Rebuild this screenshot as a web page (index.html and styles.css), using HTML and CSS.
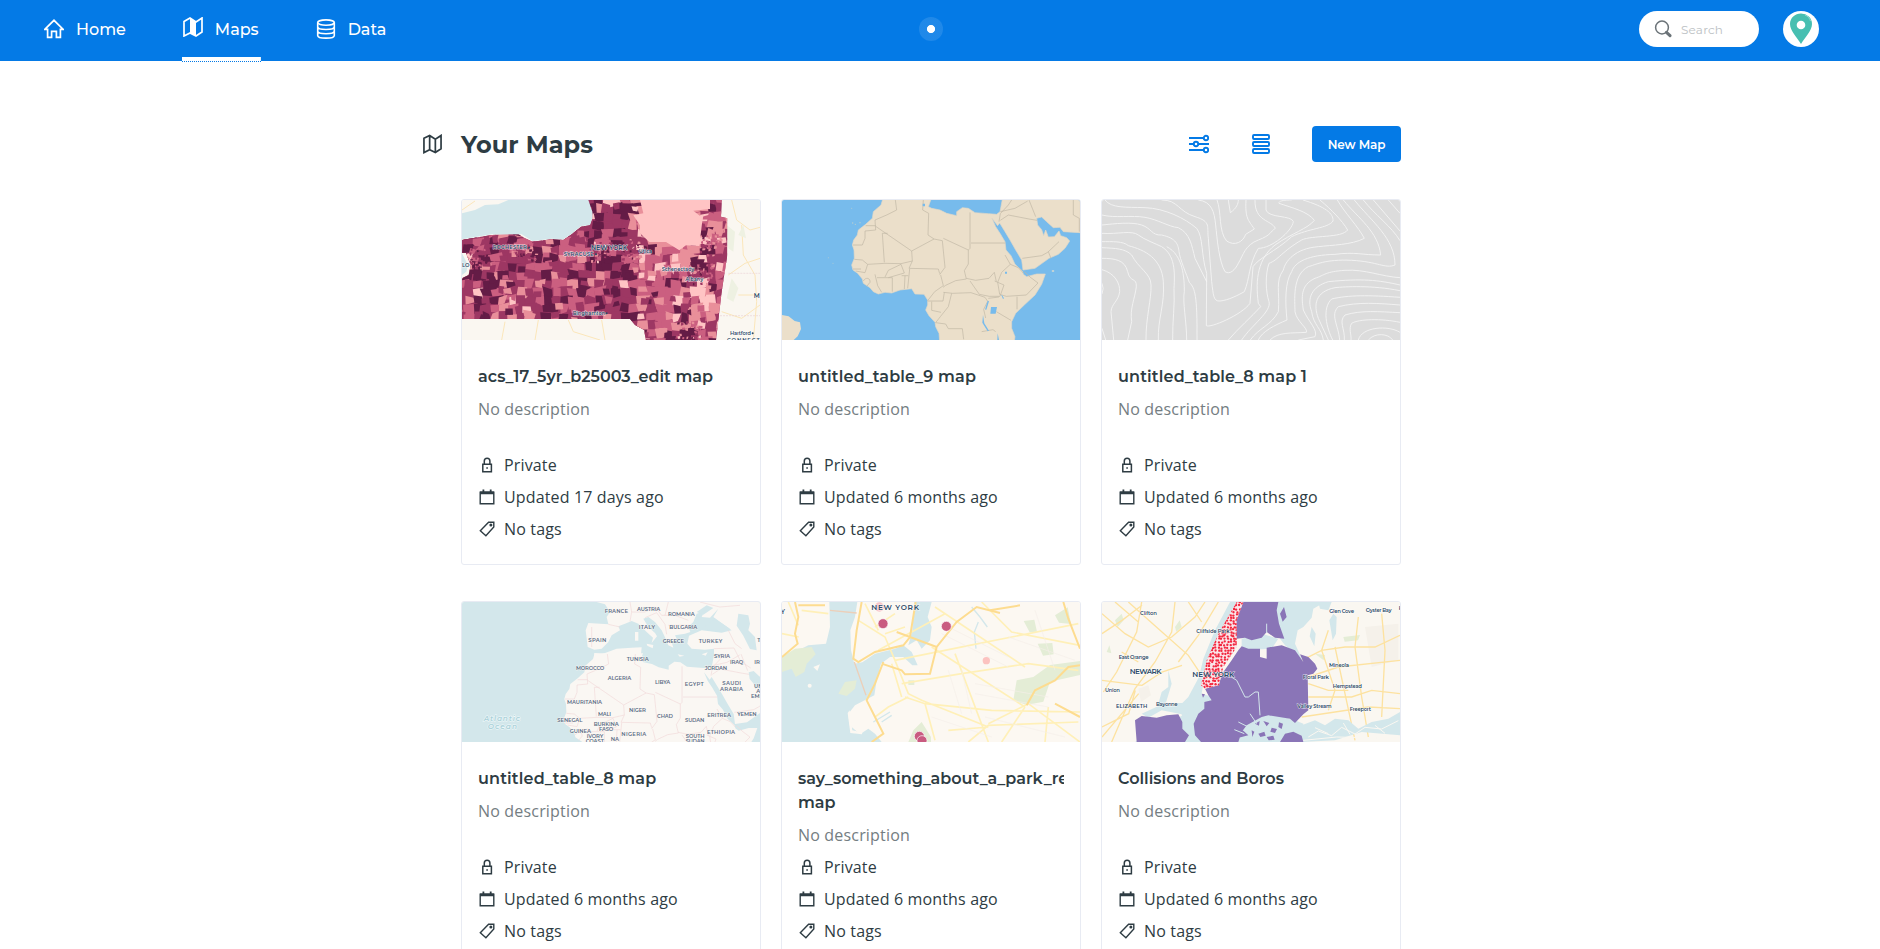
FILE: index.html
```html
<!DOCTYPE html>
<html lang="en">
<head>
<meta charset="utf-8">
<title>Your Maps</title>
<link rel="stylesheet" href="styles.css">
</head>
<body>
<svg class="defs" width="0" height="0" aria-hidden="true">
  <symbol id="i-map" viewBox="0 0 20 20"><path d="M1 4 7 1l6 4 6-4v14l-6 4-6-3-6 3zM7 1v15M13 5v14" fill="none" stroke="currentColor" stroke-width="1.8"/></symbol>
  <symbol id="i-lock" viewBox="0 0 16 16"><path d="M3.8 7.2h8.6v7.600H3.8zM5.3 7V4a2.8 2.8 0 0 1 5.6 0v3" fill="none" stroke="currentColor" stroke-width="1.5"/><path d="M7.3 10.2h1.6v1.600H7.3z" fill="currentColor"/></symbol>
  <symbol id="i-cal" viewBox="0 0 16 16"><path d="M1.2 3.2h13.600v11.600H1.2z" fill="none" stroke="currentColor" stroke-width="1.4"/><path d="M1 2.500h14v2.700H1zM3.500.5h1.800v3H3.500zM10.800.5h1.800v3h-1.800z" fill="currentColor"/></symbol>
  <symbol id="i-tag" viewBox="0 0 16 16"><path d="M1.3 9.800 9.600 1.200h5.200V6L6.900 14.800z" fill="none" stroke="currentColor" stroke-width="1.4"/><circle cx="11.900" cy="4.100" r="1.500" fill="currentColor"/></symbol>
  <symbol id="africa" viewBox="0 0 936 450" overflow="visible">
    <path d="M323 13 318 30 295 50 292 70 272 88 250 105 247 120 236 135 232 150 237 165 238 190 230 210 234 225 248 235 262 252 265 265 285 278 295 290 310 297 330 292 350 294 375 285 410 281 420 297 447 298 458 315 458 330 452 345 462 362 480 382 482 395 492 415 494 440H718L720 425 710 400 710 380 722 355 750 328 780 300 800 268 811 237 785 237 755 245 745 238 742 228 720 208 708 182 693 165 690 140 675 115 662 95 651 70 668 92 674 84 690 110 705 135 722 165 740 195 744 225 780 220 822 190 850 178 870 160 884 138 875 128 857 122 852 108 838 125 820 126 812 105 806 122 800 104 788 90 785 70 800 66 815 80 835 98 855 97 865 110 915 113V13H682L675 50 665 58 640 56 600 53 580 40 562 38 545 50 545 62 515 55 495 45 470 40 460 35 468 13Z"/>
  </symbol>
  <symbol id="borders" viewBox="0 0 936 450" overflow="visible">
    <path fill="none" d="M361 15 365 45 335 60 300 75 302 105 270 108 270 130 262 150H234M302 94 410 168 412 198 378 206 330 205 278 208 262 195 238 193M322 115 328 202M322 115h16M272 92h30M445 15l-2 30 18 10-2 65 18 12-67 36M477 132l25 5 8 80-16 22M412 198l-10 22 88 2 4 14M505 130l75 35 5-5V52M588 144h103M580 165v42l-12 20 6 25-32 5-30 14-8 6M497 240l8 32-26 18-21 27M404 222l-6 58M390 242l-2 40M380 242h20M352 248v42M306 248h46M330 246l10-20 38-18 10 26-48 14M278 208l-8 25-28-5M234 222h24M265 258c8-14 22-8 20 4l-10 12M300 238l8 34 12 20M574 250l28 6 40-6 16-18 6 28M585 258l28 40 30 6 32 0 12-34-28-12M690 180l16 28-26 24-12 30 6 36 20 6 60-4 35-36-24-18-16-16M706 208l24 10 15 16M505 292l28 3 55-2 42 14 8 12-12 24 6 26M458 318l46 0 4-26M530 295l-10 40-24 30-14 18 30 4 8 14h42l4 32M470 320v26l28 6M726 305v38M664 350l44 26M640 310l32-4M620 410l34-6 8 6M672 80l4-24 24-26 10-15M676 50l44-10 38-22M676 76l24-16 62 12 24 4M762 15l20 50M742 190l58-8 18-10 34-32M820 170l8 20M895 15v45l18 10v40"/>
  </symbol>
</svg>

<header class="topbar">
  <nav class="nav">
    <a class="nav-item"><svg class="nav-icon" viewBox="0 0 20 20"><path d="M.8 10.400 10 1.300l9.200 9.100H16.400v8H12.400v-6H7.600v6H3.600v-8z" fill="none" stroke="#fff" stroke-width="1.700"/></svg><span>Home</span></a>
    <a class="nav-item active"><svg class="nav-icon up" viewBox="0 0 20 20"><path d="M1 4.500 7 1l6 4 6-4v14l-6 4-6-3-6 3z" fill="none" stroke="#fff" stroke-width="1.700"/><path d="M7 1l6 4v14l-6-3z" fill="#fff"/></svg><span>Maps</span></a>
    <a class="nav-item"><svg class="nav-icon" viewBox="0 0 20 20"><g fill="none" stroke="#fff" stroke-width="1.600"><ellipse cx="10" cy="3.600" rx="8.300" ry="2.700"/><path d="M1.700 3.600v12.800c0 3.600 16.600 3.600 16.600 0V3.600M1.700 7.800c0 3.600 16.600 3.600 16.600 0M1.700 12.100c0 3.600 16.600 3.600 16.600 0"/></g></svg><span>Data</span></a>
  </nav>
  <div class="pulse"></div>
  <div class="tools">
    <div class="search"><svg viewBox="0 0 18 18"><circle cx="8" cy="7.500" r="6.400" fill="none" stroke="#6b7378" stroke-width="1.500"/><path d="M12.500 12.300l3.500 3.400" stroke="#6b7378" stroke-width="3" stroke-linecap="round"/></svg><span>Search</span></div>
    <svg class="avatar" viewBox="0 0 36 36"><circle cx="18" cy="18" r="18" fill="#fff"/><path d="M18 33C14 26 7 20 7 13a11 10.500 0 0 1 22 0c0 7-7 13-11 20z" fill="#47bfb1"/><path d="M22 4c3 1 5 4 5.500 6" stroke="#8fd9d0" fill="none"/><circle cx="18" cy="14" r="4.300" fill="#fff"/></svg>
  </div>
</header>

<main class="page">
  <div class="heading">
    <svg class="head-icon"><use href="#i-map"/></svg>
    <h1>Your Maps</h1>
    <div class="actions">
      <svg class="act" viewBox="0 0 20 20"><g fill="none" stroke="#047ae6" stroke-width="1.900"><path d="M0 4h14.500M0 10h4.500M9.500 10H20M0 16h14.500"/><circle cx="17" cy="4" r="2.200"/><circle cx="7" cy="10" r="2.200"/><circle cx="17" cy="16" r="2.200"/></g></svg>
      <svg class="act rows" viewBox="0 0 18 20"><g fill="none" stroke="#047ae6" stroke-width="1.900"><rect x="1" y="1" width="16" height="4" rx="1"/><rect x="1" y="8" width="16" height="4" rx="1"/><rect x="1" y="15" width="16" height="4" rx="1"/></g></svg>
      <button class="new-map">New Map</button>
    </div>
  </div>

  <section class="grid">
    <article class="card">
      <svg class="thumb" viewBox="21 15 894 420">
        <path fill="#faf7f1" d="M21 15h894v420H21z"/>
        <g fill="none" stroke="#fbe6ba" stroke-width="3"><path d="M21 45 60 18M140 435l10-55M250 375l-10 60M340 375l15 35 80 25M830 15l15 60 40 30 30-8M860 90l5 90 35 60 5 80-10 115M820 240l50-35 45-15M800 350l60 20 55-40M850 300l60 0M440 375l10 60"/></g>
        <path d="M820 235h95M786 362h129" stroke="#ecd3d6" stroke-width="2" stroke-dasharray="6 3"/>
        <g fill="#eef1e2"><path d="M815 90l25 20-5 60-15-10zM830 250l20 30-15 40-20-10zM850 120l15-30 8 40z"/></g>
        <clipPath id="state"><path d="M21 135 60 128 110 120 190 118 210 130 232 140 290 133 325 135 350 118 378 95 405 90 412 70 412 50 400 25 385 15H800L798 65 817 70 817 180 800 290 783 435H572L568 405 540 390 525 372H21V250l20-10 6-30-14-36-12 0z"/></clipPath>
        <g id="counties" clip-path="url(#state)"></g>
        <path clip-path="url(#state)" fill="#ffc4c4" d="M555 15H765V42l-50 5 28 22-10 84-40-2-20 15-40-25-50 0-28-26 0-24-20-30 30-6z"/>
        <path fill="#d3e7eb" d="M21 55 60 45 90 30 130 28 160 15H400L412 50 412 70 405 90 378 93 350 116 325 133 290 131 232 138 200 118 110 118 21 133zM21 175l18 35-5 20-13 10z"/>
        <g class="lbl"><text x="113" y="163" textLength="103">ROCHESTER</text><text x="326" y="184" textLength="90">SYRACUSE</text><text x="408" y="165" class="mid" textLength="109">NEW YORK</text><text x="551" y="174" textLength="40">Utica</text><text x="620" y="228" textLength="98">Schenectady</text><text x="691" y="259" textLength="54">Albany</text><text x="353" y="361" textLength="98">Binghamton</text><text x="825" y="421" textLength="63">Hartford</text><text x="21" y="215">LO</text><text x="896" y="309" class="mid">M</text><text x="816" y="441" textLength="98">CONNECT</text></g>
        <g fill="#2c4a68"><circle cx="893" cy="415" r="3"/><circle cx="222" cy="158" r="3"/><circle cx="423" cy="178" r="3"/><circle cx="455" cy="355" r="3"/></g>
      </svg>
      <div class="body"><div class="info"><h2 class="snug">acs_17_5yr_b25003_edit map</h2><p>No description</p></div>
      <ul><li><svg><use href="#i-lock"/></svg>Private</li><li><svg><use href="#i-cal"/></svg>Updated 17 days ago</li><li><svg><use href="#i-tag"/></svg>No tags</li></ul></div>
    </article>

    <article class="card">
      <svg class="thumb" viewBox="21 15 894 420">
        <path fill="#77bbec" d="M21 15h894v420H21z"/>
        <use href="#africa" width="936" height="450" fill="#ebdfca" stroke="#e2d8c6" stroke-width="2"/>
        <use href="#borders" width="936" height="450" stroke="#c0b6a5" stroke-width="2"/>
        <path fill="#ebdfca" d="M21 360l20 4 18 14 16 4 3 20-10 22-12 11H21z"/>
        <path fill="#77bbec" d="M648 336h18l-4 20-16 0zM443 26h7v8h-7zM690 230h6v6h-6zM681 300l6 10-3 2-5-12zM624 360l4 25 14 22-4 2-16-26zM668 415l4 20h-5z"/>
        <path d="M640 318l-8 26" stroke="#77bbec" stroke-width="4"/><ellipse cx="834" cy="228" rx="4" ry="2" fill="#ebdfca"/>
        <g fill="#b9cdd0"><circle cx="233" cy="84" r="2"/><circle cx="241" cy="88" r="2"/><circle cx="255" cy="83" r="2"/><circle cx="230" cy="40" r="1.500"/><circle cx="160" cy="188" r="1.500"/><circle cx="174" cy="205" r="1.500"/></g>
      </svg>
      <div class="body"><div class="info"><h2 class="loose">untitled_table_9 map</h2><p>No description</p></div>
      <ul><li><svg><use href="#i-lock"/></svg>Private</li><li><svg><use href="#i-cal"/></svg>Updated 6 months ago</li><li><svg><use href="#i-tag"/></svg>No tags</li></ul></div>
    </article>

    <article class="card">
      <svg class="thumb" viewBox="21 15 894 420">
        <path fill="#dcdcdc" d="M21 15h894v420H21z"/>
        <g fill="none" stroke="#f5f5f5" stroke-width="2.600">
          <path d="M30 15C50 40 90 36 150 38S270 70 305 100C325 125 318 180 335 235L334 392C345 400 440 360 465 325L474 215C490 190 540 170 590 125 640 100 700 100 714 78 716 55 690 35 624 15"/>
          <path d="M21 60C60 70 110 60 150 67S220 95 250 98C285 115 290 150 300 190L335 260"/>
          <path d="M200 15C250 15 250 50 300 65S335 95 340 130L350 260C355 300 355 320 375 318 400 316 430 300 448 290 465 250 460 210 490 160 530 160 590 110 595 80 590 60 520 70 513 45V15"/>
          <path d="M310 15C350 20 358 50 362 90S372 200 390 230C405 240 420 225 430 205 445 180 450 150 490 135S525 110 541 100C530 75 478 80 480 15"/>
          <path d="M366 15C380 50 370 110 395 138 420 155 445 140 452 118L478 102C460 75 450 70 453 15M400 15 406 53C425 40 430 25 430 15"/>
          <path d="M21 90C60 86 110 80 140 90S170 122 200 120C245 130 250 150 252 170S275 240 283 262C300 280 307 300 306 435"/>
          <path d="M21 115C70 118 110 105 130 120S180 145 200 155C240 180 240 230 237 280 240 330 232 380 233 435"/>
          <path d="M21 140C50 140 85 138 100 152 150 165 200 190 205 260S188 370 190 435"/>
          <path d="M21 158C60 160 90 160 110 180 130 220 168 235 168 270 170 310 152 370 153 435"/>
          <path d="M21 190C60 190 90 195 98 230S125 245 124 275C120 310 104 340 110 380L98 435M21 224C60 235 75 265 74 290 70 320 50 325 48 350L56 435M21 400 32 435"/>
          <path d="M21 265Q28 280 21 297M215 155C265 180 268 250 268 290 262 320 275 380 275 435"/>
          <path d="M590 15C545 15 552 25 552 25 590 38 640 50 658 76 640 100 590 115 540 150 490 190 480 250 490 325L497 335C470 365 430 400 400 435"/>
          <path d="M675 15C710 45 740 75 758 105 740 130 650 120 620 135 560 170 550 195 522 205 510 240 512 290 522 320 530 350 470 390 440 435"/>
          <path d="M727 15C750 55 790 95 808 130 770 150 710 150 670 155 600 160 570 200 565 225 540 260 555 290 550 350 530 390 490 400 466 435"/>
          <path d="M745 15C790 70 850 110 857 180 800 180 780 170 720 178 640 180 600 200 590 230 570 260 570 320 576 375 540 390 500 410 490 435"/>
          <path d="M778 15C830 80 900 130 900 210 870 222 850 200 770 196S660 210 640 215C590 240 600 320 600 350 605 380 640 400 634 412 590 415 550 410 525 435"/>
          <path d="M805 15C840 60 890 95 915 137M835 15 915 108M880 15 915 55"/>
          <path d="M915 248C860 245 810 222 750 226S690 240 660 250C615 270 620 310 625 345 640 380 670 405 660 425L610 435"/>
          <path d="M915 270C850 255 800 250 700 260 650 275 635 310 650 350 655 390 680 400 685 435"/>
          <path d="M915 287C830 270 750 275 720 278 660 290 655 330 670 370L700 435M915 307C820 300 760 300 710 312 680 340 695 400 713 435"/>
          <path d="M915 330C850 325 790 320 730 335 705 360 730 390 734 435M915 353C850 350 800 345 750 360 730 380 750 400 748 435M915 382C860 370 790 372 770 385 760 400 770 420 768 435M790 435C800 395 880 390 915 412M820 435C840 412 880 415 893 435"/>
        </g>
      </svg>
      <div class="body"><div class="info"><h2 class="loose">untitled_table_8 map 1</h2><p>No description</p></div>
      <ul><li><svg><use href="#i-lock"/></svg>Private</li><li><svg><use href="#i-cal"/></svg>Updated 6 months ago</li><li><svg><use href="#i-tag"/></svg>No tags</li></ul></div>
    </article>

    <article class="card">
      <svg class="thumb" viewBox="21 15 894 420">
        <path fill="#d3e7eb" d="M21 15h894v420H21z"/>
        <g fill="#faf7f3">
          <use href="#africa" x="96" y="156" width="936" height="450"/>
          <path d="M418 168 440 172 485 155 530 152 560 151 558 172 568 185 556 205 500 220 418 210zM425 15 450 22 465 45 455 60 460 82 400 78 392 100 398 150 418 158 440 155 460 135 470 115 495 100 490 88 510 80 530 72 550 80 575 105 594 122 590 138 606 118 600 108 580 90 565 65 580 60 600 75 620 100 632 125 640 145 655 152 650 135 665 125 660 115 690 110 706 105 700 90 715 75 725 50 748 43 740 60 765 62 790 35 775 60 830 100 800 107 740 100 702 116 697 140 710 155 750 158 777 155V180H915V15zM540 105h10v26h-10zM575 140l20 4-2 10-16-8zM668 172l20 4-14 3zM740 172l18-6-6 10z"/>
        </g>
        <path fill="#d3e7eb" d="M850 50l30 5 5 25-5 20 20 20 5 40-20-4-20-40-20-30zM725 45l30-20 20 8-30 20zM780 65l45 30-40 5-45-5z"/>
        <g stroke="#f1d9da" stroke-width="2" fill="none"><use href="#borders" x="96" y="156" width="936" height="450"/><path d="M460 82l35 8M410 90v60M525 15l5 30-5 28M530 45h40l30-15M570 62l35-15 25 35 5 30M600 30l20 25h40l40 15M640 85h65M640 15l-10 40M735 15l60 15 60-5M820 100l20 40 20 15M777 155l60-2 20 40 30 20"/></g>
        <g class="lbl g"><text x="449" y="48" textLength="70">FRANCE</text><text x="546" y="41" textLength="70">AUSTRIA</text><text x="639" y="57" textLength="80">ROMANIA</text><text x="551" y="96" textLength="49">ITALY</text><text x="643" y="97" textLength="84">BULGARIA</text><text x="400" y="134" textLength="54">SPAIN</text><text x="623" y="137" textLength="64">GREECE</text><text x="731" y="137" textLength="71">TURKEY</text><text x="515" y="192" textLength="66">TUNISIA</text><text x="777" y="184" textLength="48">SYRIA</text><text x="825" y="201" textLength="40">IRAQ</text><text x="898" y="200">IR</text><text x="907" y="134">T</text><text x="363" y="219" textLength="85">MOROCCO</text><text x="749" y="219" textLength="67">JORDAN</text><text x="458" y="250" textLength="71">ALGERIA</text><text x="600" y="261" textLength="46">LIBYA</text><text x="689" y="267" textLength="57">EGYPT</text><text x="802" y="265" textLength="56">SAUDI</text><text x="795" y="282" textLength="69">ARABIA</text><text x="897" y="272">UN</text><text x="904" y="288">A</text><text x="888" y="303">EMI</text><text x="336" y="322" textLength="105">MAURITANIA</text><text x="522" y="346" textLength="51">NIGER</text><text x="429" y="357" textLength="39">MALI</text><text x="606" y="364" textLength="48">CHAD</text><text x="690" y="374" textLength="58">SUDAN</text><text x="757" y="361" textLength="71">ERITREA</text><text x="847" y="357" textLength="58">YEMEN</text><text x="307" y="375" textLength="75">SENEGAL</text><text x="416" y="388" textLength="75">BURKINA</text><text x="432" y="403" textLength="43">FASO</text><text x="344" y="408" textLength="64">GUINEA</text><text x="395" y="424" textLength="50">IVORY</text><text x="392" y="439" textLength="55">COAST</text><text x="467" y="431">NA</text><text x="499" y="418" textLength="75">NIGERIA</text><text x="692" y="424" textLength="57">SOUTH</text><text x="692" y="439" textLength="57">SUDAN</text><text x="756" y="412" textLength="84">ETHIOPIA</text></g>
        <g class="ocean"><text x="86" y="371" textLength="109">Atlantic</text><text x="98" y="397" textLength="88">Ocean</text></g>
      </svg>
      <div class="body"><div class="info"><h2 class="loose">untitled_table_8 map</h2><p>No description</p></div>
      <ul><li><svg><use href="#i-lock"/></svg>Private</li><li><svg><use href="#i-cal"/></svg>Updated 6 months ago</li><li><svg><use href="#i-tag"/></svg>No tags</li></ul></div>
    </article>

    <article class="card">
      <svg class="thumb" viewBox="21 15 894 420">
        <path fill="#fcf8f2" d="M21 15h894v420H21z"/>
        <path fill="#d3e7eb" d="M163 15H247L240 60 226 100 228 160 238 200 262 196 300 170 360 155 385 145 410 165 428 205 412 205 385 180 345 180 318 200 305 250 298 295 240 325 220 350 224 385 255 412 280 395 300 410 320 435H21V190L60 165 100 145 153 140 165 90z"/>
        <path fill="#d3e7eb" d="M418 15H470L458 60 470 90 465 130 440 155 425 130 400 145 412 100z"/>
        <path fill="none" stroke="#d3e7eb" stroke-width="4" d="M590 30l25 30 22 30M610 75l-12 30 5 50M345 345l-50 30M320 375l30-20"/>
        <g fill="#e4edd6"><path d="M21 180 60 155 110 150 122 172 95 200 88 225 62 240 50 215 21 225zM190 290l20-35 35-5-5 25-25 22zM746 72l32-4 8 36-22 2zM788 140l44-2 4 34-32 4zM840 55l38-24 10 50-36-4zM715 310l10-60 50-10 50-36 90-12v42l-90 20-20 60-50 10zM400 435l15-35 25-25 28 45v15zM400 250h18v14h-18z"/></g>
        <g fill="#fcf8f2"><circle cx="104" cy="266" r="6"/><path d="M115 210l20-8-8 20zM224 340l8 60 20 4 14-28-5 36-35-4-8-60zM250 330l30-4-20 12zM270 350l30-2-26 12z"/></g>
        <g fill="none" stroke="#fff0b8" stroke-width="5"><path d="M250 70l80 50 30 70 40 100 40 20 200 80M270 20l40 80M310 160l200-110M300 90l60-40M360 190l250-50 300-60M380 260l180-30 200-30 150 20M390 300l60 20 200 20 265 5M470 150l280 180M480 30l270 180M540 170l100 265M620 15l90 90 205 40M640 380l120-60 155 115M400 300l-60 30-40 30M580 435l60-50 270-10M520 400l120-10M750 330l-70 105M820 330l-10 105M450 320l30 110M350 200l30 100M330 110l60-20M21 110l50 10M80 40l80 10M40 15l30 70"/></g>
        <g fill="none" stroke="#f5efe8" stroke-width="2"><path d="M500 80l200 100M500 110l200 100M600 260l220 40M600 290l220 40M520 220l40 130M560 220l30 130M630 360l240 60M470 360l180 60M780 40l60 180M700 120l200 70"/></g>
        <g fill="none" stroke="#fddc90" stroke-width="6"><path d="M60 15 70 60 60 110 68 140 21 180M70 25h80M260 15 245 100 235 185 250 195 300 165 385 145 405 120 422 15M365 105l120 45M320 200l60 20 10 12 75-2 20-80 60-75 60-45 70 18M325 195 300 260 275 310 300 360 325 410 290 435M645 40l90-15M865 15l15 50 35 90M755 325l25-45 60-30 40-40 35-5M840 320l75 40"/></g>
        <path d="M165 40l80 8M238 195l35 100" stroke="#eccfb9" stroke-width="4" fill="none"/>
        <circle cx="313" cy="30" r="14" fill="#f7c4c8"/>
        <g fill="#c95b80" stroke="#fff" stroke-width="2"><circle cx="324" cy="80" r="15"/><circle cx="514" cy="88" r="15"/><circle cx="433" cy="418" r="15"/><circle cx="441" cy="431" r="15"/></g><circle cx="634" cy="191" r="11" fill="#fcc3c0"/>
        <g class="lbl"><text x="289" y="39" class="big" textLength="143">NEW YORK</text><text x="17" y="51" class="mid">Y</text></g>
      </svg>
      <div class="body"><div class="info"><h2>say_something_about_a_park_recently map</h2><p>No description</p></div>
      <ul><li><svg><use href="#i-lock"/></svg>Private</li><li><svg><use href="#i-cal"/></svg>Updated 6 months ago</li><li><svg><use href="#i-tag"/></svg>No tags</li></ul></div>
    </article>

    <article class="card">
      <svg class="thumb" viewBox="21 15 894 420">
        <path fill="#faf7f1" d="M21 15h894v420H21z"/>
        <g fill="#e4edd6"><path d="M60 70l20-20 6 20-18 20zM240 90l14-20 6 20-16 14zM35 165l8-20 6 24zM660 170l30 4-4 16zM745 120l50-6-6 16-40 4zM850 160l24 10-16 16z"/></g>
        <path fill="#f5f1ea" d="M810 90l100-10v110l-80 20zM130 275l30-10 8 30-30 20z"/>
        <g fill="none" stroke="#fde2a0" stroke-width="4"><path d="M21 50 90 110 160 150 230 120 300 60 330 15M21 110l60-40 60-45M140 15l-15 90-60 120-40 60M100 15l90 80 90 80 40 60M21 250l120 15 60-40 60-20M240 15l-10 90-50 90-60 80-40 90-30 70M80 165l50 30M21 390l80-40 20-70M280 15l40 60M370 15l-60 100-60 80M21 420l110-130M60 15l70 60M620 190l60-30 70-10 90 0 75-35M640 240l90-30 185-20M640 300l130 0 60-20 85 10M700 100l-20 60 40 120-20 60M790 60l-10 90 20 150 20 120M860 50l10 110-10 200M620 360l200-30 95 5M720 150l60 280M640 260l60 20 60 0"/></g>
        <path fill="#d3e7eb" d="M405 15H425L400 60 360 150 330 230 320 290 300 340 295 400 310 435H260L270 400 260 352 200 340 160 362 140 350 210 318 262 318 280 300 312 240 325 185 360 100zM190 320l10-35 20-15 0-50 10 40-12 40-8 25zM540 15H690L655 35 650 62 625 90 608 100 600 140 625 195 600 170 570 145 555 125 545 60zM715 50l10 10-2 50-10 20-10-60zM650 90l12 20-4 38-14-30zM670 15h40l-10 25-25-5z"/>
        <path fill="#d3e7eb" d="M440 125l60-15 50 15-20 30-90 5zM620 385 660 370 690 385 720 365 760 370 790 395 830 375 880 365 915 345V415L800 405 720 430 620 435z"/>
        <path fill="#d3e7eb" d="M120 435H625V380L600 370 460 330 320 290 290 340z"/>
        <g fill="#8a75b7"><path d="M445 15H550L545 40 552 80 568 125 540 122 515 105 500 122 470 130 450 122 425 125 418 80zM330 275 370 262 385 225 410 190 430 160 440 148 460 155 495 155 495 180 515 185 515 152 560 145 600 160 625 195 615 172 640 180 660 200 667 215 655 230 638 235 640 340 625 352 600 378 585 365 520 355 500 360 455 385 440 405 430 435H318L300 415 296 380 310 350 328 335 328 315 350 310 340 295zM120 370 140 357 185 362 215 355 250 352 262 375 262 395 282 415 270 435H125zM555 50l12-20 8 30-12 14zM320 290l10 2-6 10zM555 435l15-25 25-6 25 12 5 19zM415 405l30-4 15 14-40 10z"/></g>
        <g fill="#8a75b7"><path d="M480 380l14-8-2 14zM505 372l18 6-8 10zM530 392l16 4-6 12-14-4zM490 410l18-6 4 12-16 4zM552 376l12 4-4 16-10-6zM515 420l20-4 4 12-18 2zM470 400l8 4-6 16z"/></g>
        <g fill="none" stroke="#d3e7eb" stroke-width="3"><path d="M385 225l40 25 25 50 10 0 20-15 10 0 5 70M515 80l0 28M465 350l20 30M430 375l30 15M418 398l30 12"/></g>
        <g fill="none" stroke="#faf7f1" stroke-width="3"><path d="M640 420l30-18 40 14 30-25 40 20 30-20 50 5 50-25M660 392l40 18M745 378l20 34M840 385l30 24M625 430l100-10 190 4"/></g>
        <path fill="#fbe6ea" d="M425 15H445L425 70 425 150 385 210 372 265 330 275 318 265 335 190 370 110z"/>
        <clipPath id="borough"><path d="M425 15H445L425 70 425 150 385 210 372 265 330 275 318 265 335 190 370 110z"/></clipPath>
        <g id="dots" fill="#f3273f" clip-path="url(#borough)"></g>
        <g class="lbl"><text x="135" y="54" textLength="51">Clifton</text><text x="304" y="107" textLength="100">Cliffside Park</text><text x="71" y="186" textLength="90">East Orange</text><text x="104" y="232" class="big" textLength="96">NEWARK</text><text x="292" y="241" class="big" textLength="126">NEW YORK</text><text x="30" y="286" textLength="45">Union</text><text x="63" y="333" textLength="94">ELIZABETH</text><text x="183" y="328" textLength="65">Bayonne</text><text x="703" y="48" textLength="74">Glen Cove</text><text x="812" y="44" textLength="78">Oyster Bay</text><text x="911" y="40">H</text><text x="702" y="211" textLength="60">Mineola</text><text x="623" y="246" textLength="79">Floral Park</text><text x="713" y="273" textLength="88">Hempstead</text><text x="607" y="334" textLength="103">Valley Stream</text><text x="764" y="343" textLength="64">Freeport</text></g>
      </svg>
      <div class="body"><div class="info"><h2>Collisions and Boros</h2><p>No description</p></div>
      <ul><li><svg><use href="#i-lock"/></svg>Private</li><li><svg><use href="#i-cal"/></svg>Updated 6 months ago</li><li><svg><use href="#i-tag"/></svg>No tags</li></ul></div>
    </article>
  </section>
</main>
<script src="maps.js"></script>
</body>
</html>
```
FILE: styles.css
```css
* { box-sizing: border-box; }
html, body { height: 100%; overflow: hidden; }
body { margin: 0; background: #fff; color: #2e3c43; font-family: "Open Sans", sans-serif; }
.defs { position: absolute; }

.topbar { position: relative; height: 61px; background: #047ae6; display: flex; justify-content: space-between; padding: 0 61px 0 43px; font-family: Montserrat, Inter, sans-serif; color: #fff; }
.nav { display: flex; gap: 54px; }
.nav-item { display: flex; align-items: center; gap: 12px; height: 61px; padding: 0 2px 4px 1px; font-size: 16px; font-weight: 500; }
.nav-item span { padding-top: 2px; }
.nav-icon { width: 20px; height: 20px; }
.nav-icon.up { margin-bottom: 3px; }
.nav-item.active { background: linear-gradient(#fff, #fff) bottom / 100% 4px no-repeat; position: relative; }
.nav-item.active::after { content: ""; position: absolute; left: 0; right: 0; bottom: -1px; border-bottom: 1px dotted #047ae6; }
.pulse { position: absolute; left: 919px; top: 17px; width: 24px; height: 24px; border-radius: 50%; background: radial-gradient(circle, #fff 3.7px, rgba(255,255,255,.11) 4.4px); }
.tools { display: flex; gap: 24px; padding-top: 11px; }
.search { width: 120px; height: 36px; border-radius: 18px; background: #fff; display: flex; align-items: center; padding-left: 15px; gap: 9px; color: #bcc1c4; font-size: 12px; letter-spacing: .2px; }
.search svg { width: 18px; height: 18px; margin-bottom: 1px; }
.search span { padding-top: 1px; }
.avatar { width: 36px; height: 36px; }

.page { width: 978px; margin: 65px 0 0 423px; }
.heading { display: flex; align-items: center; height: 36px; }
.head-icon { width: 19px; height: 20px; margin-right: 19px; }
h1 { margin: 0; padding-top: 2px; font: 700 24px/36px Montserrat, Inter, sans-serif; letter-spacing: .1px; }
.actions { margin-left: auto; display: flex; align-items: center; }
.act { width: 20px; height: 20px; }
.act.rows { width: 18px; margin: 0 42px 0 43px; }
.new-map { width: 89px; height: 36px; border: 0; border-radius: 4px; background: #047ae6; color: #fff; font: 600 12px Montserrat, Inter, sans-serif; letter-spacing: -.1px; padding: 1px 0 0; }

.grid { margin: 37px 0 0 38px; display: grid; grid-template-columns: repeat(3, 300px); gap: 36px 20px; }
.card { height: 366px; border: 1px solid #e8ebf3; border-radius: 3px; overflow: hidden; background: #fff; }
.thumb { display: block; width: 298px; height: 140px; }
.body { padding: 25px 16px 23px; }
.info { height: 88px; }
h2 { margin: 0; font: 600 16px/24px Montserrat, Inter, sans-serif; overflow: hidden; }
h2.snug { letter-spacing: .05px; }
h2.loose { letter-spacing: .15px; }
p { margin: 8px 0 0; font-size: 16px; line-height: 24px; color: #747d82; letter-spacing: .18px; }
ul { list-style: none; margin: 0; padding: 0; display: grid; gap: 8px; }
li { display: flex; align-items: center; gap: 9px; font-size: 16px; line-height: 24px; letter-spacing: .15px; }
li svg { width: 16px; height: 16px; margin: 0 0 1px 1px; }

.lbl { font: 600 16px Montserrat, Inter, sans-serif; fill: #2c4a68; stroke: #fff; stroke-opacity: .7; stroke-width: 3px; paint-order: stroke; }
.lbl.g { fill: #5d6e86; stroke: #faf7f3; }
.lbl .mid { font-size: 19px; }
.lbl .big { font-size: 22px; }
.ocean { font: italic 600 22px Montserrat, Inter, sans-serif; fill: #a9d0d8; stroke: #f1fafb; stroke-width: 3px; paint-order: stroke; }
```
FILE: maps.js
```js
// Seeded generator keeps the thumbnails stable between loads.
let seed = 7;
const rnd = () => (seed = (seed * 16807) % 2147483647) / 2147483647;
const NS = 'http://www.w3.org/2000/svg';
const shape = (parent, tag, attrs) => {
  const el = document.createElementNS(NS, tag);
  for (const k in attrs) el.setAttribute(k, attrs[k]);
  parent.appendChild(el);
};

const palette = ['#641c46', '#9d3763', '#cb5f80', '#e98f9a', '#ffc4c4'];
const counties = document.getElementById('counties');
shape(counties, 'rect', { x: 0, y: 0, width: 940, height: 450, fill: '#9d3763' });
const pick = (x) => {
  const w = x < 520 ? [0.28, 0.64, 0.88, 0.97] : [0.12, 0.34, 0.62, 0.88];
  const r = rnd();
  const i = w.findIndex((v) => r < v);
  return palette[i < 0 ? 4 : i];
};
const cell = (x, y, s) => {
  const j = () => (rnd() - 0.5) * s * 0.45;
  const w = s * (0.8 + rnd() * 0.8), h = s * (0.8 + rnd() * 0.6);
  const pts = [[x + j(), y + j()], [x + w + j(), y + j()], [x + w + j(), y + h + j()], [x + j(), y + h + j()]];
  shape(counties, 'polygon', { points: pts.map((p) => p.join()).join(' '), fill: pick(x) });
};
for (let y = 0; y < 440; y += 25) for (let x = 0; x < 830; x += 26) cell(x + rnd() * 6, y + rnd() * 6, 27);
for (let i = 0; i < 150; i++) cell(20 + rnd() * 790, 20 + rnd() * 410, 16);
[[210, 165], [65, 190], [430, 170], [735, 235], [530, 160], [700, 410], [765, 150]].forEach(([cx, cy]) => {
  for (let i = 0; i < 35; i++) cell(cx + (rnd() - 0.5) * 70, cy + (rnd() - 0.5) * 60, 6);
});

const dots = document.getElementById('dots');
for (let y = 15; y < 280; y += 9) for (let x = 315; x < 450; x += 9) {
  shape(dots, 'circle', { cx: x + rnd() * 5, cy: y + rnd() * 5, r: 3.5 });
}
```
